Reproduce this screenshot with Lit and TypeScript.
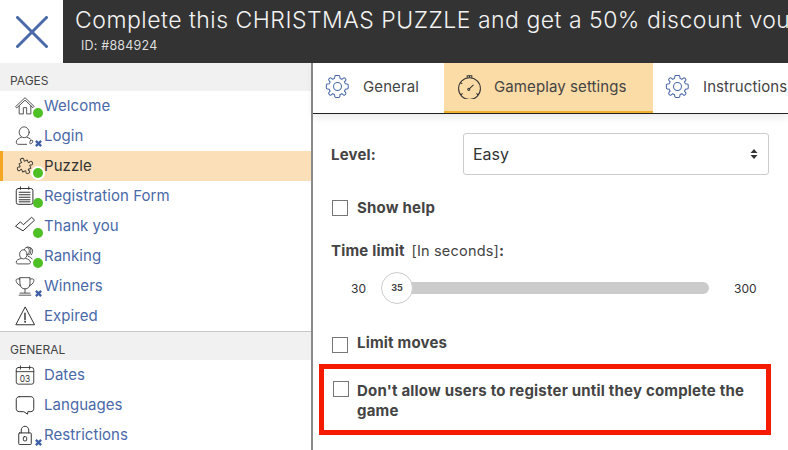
import { LitElement, html, css, svg } from "lit";
import { customElement } from "lit/decorators.js";

const ic = (body: unknown, vb = "0 0 24 24") => html`<svg class="ico" viewBox=${vb} fill="none" stroke="currentColor" stroke-width="1" stroke-linecap="round" stroke-linejoin="round">${body}</svg>`;

const icons: Record<string, unknown> = {
  home: svg`<path d="M1 12.500 12 2l11 10.500-1.500 1.500L12 5 2.500 14z"/><path d="M5 12v9.500h5v-7.500h4v7.500h5V12"/>`,
  user: svg`<ellipse cx="11" cy="7.500" rx="6" ry="6.500"/><path d="M7.500 13.500C4 15 1.500 16.500 1.500 19.500c0 1.500 1 2.500 2.500 2.500h10"/><path d="M14.500 13.500c1.500.5 3 1.200 4 2"/><path d="M18.500 17.500c1-1 2.800-.6 2.800.6 0 1.600-1.500 3.400-2.700 3.400-.9 0-1.300-2.400-.1-4z"/>`,
  puzzle: svg`<g transform="rotate(-25 12 12) scale(.9) translate(1.300 1.300)"><path stroke-width="1.200" d="M6 6h3.500c.8 0 .8-.8.4-1.500-.4-.8-.4-1.300-.4-1.500 0-1.200 1.100-2 2.500-2s2.500.8 2.500 2c0 .2 0 .7-.4 1.500-.4.7-.4 1.500.4 1.500H18v3.500c0 .8.8.8 1.500.4.8-.4 1.300-.4 1.500-.4 1.200 0 2 1.100 2 2.500s-.8 2.500-2 2.500c-.2 0-.7 0-1.500-.4-.7-.4-1.500-.4-1.500.4V18h-3.500c-.8 0-.8.8-.4 1.500.4.8.4 1.300.4 1.500 0 1.200-1.100 2-2.500 2s-2.500-.8-2.500-2c0-.2 0-.7.4-1.500.4-.7.4-1.500-.4-1.500H6v-3.500c0-.8-.8-.8-1.500-.4-.8.4-1.300.4-1.500.4-1.200 0-2-1.100-2-2.500s.8-2.500 2-2.500c.2 0 .7 0 1.500.4.700.4 1.500.4 1.500-.4z"/></g>`,
  form: svg`<rect x="1.500" y="3" width="20" height="19" rx="2.500" stroke-width="1.200"/><path d="M6.500 1v3M16.500 1v3M5 7.500h13M5 10.500h13M5 13.500h13M5 16.500h13M5 19h13" stroke-width="1.200"/>`,
  check: svg`<path d="M1 12 6.500 7l3.500 3.500 10-9 3.500 3.500L10 17.500z" stroke-width="1.200"/>`,
  ranking: svg`<ellipse cx="10" cy="10" rx="4.500" ry="5.500"/><path d="M7 15c-3 1-5.500 2-5.500 4.500 0 1.500 1 2 2.500 2h12c1.500 0 2.500-.5 2.500-2 0-2.500-2.500-3.500-5.500-4.500"/><path d="M11 4.500c.5-2 2.500-3 4-2.500 2 .7 2.500 3 2 5.500-.3 1.500-.8 2.500-1.500 3.500M14 1.500c2-1 4 0 4.800 2 .7 2 .2 5-1.200 7M17 2c2-.5 3.500 1 4 3 .4 2-.2 4-1.300 5.500M16 12.500c2 .8 4 1.500 4.500 3"/>`,
  trophy: svg`<path d="M6 2h12v7.500c0 3.500-2.500 6-6 6s-6-2.500-6-6z"/><path d="M6 3.500H3C1.500 3.500 1 5 1.500 6.500 2.300 9 4 10.500 6.500 11.500M18 3.500h3c1.500 0 2 1.500 1.500 3-.8 2.500-2.500 4-5 5"/><path d="M12 15.500V20M6 20.500h12M5 23h14"/>`,
  warn: svg`<path d="M12 1.500 1 22.500h22z" stroke-width="1.200"/><path d="M12 8.500v8" stroke-width="1.700"/><circle cx="12" cy="19" r=".6" fill="currentColor"/>`,
  cal: html`<svg class="ico" viewBox="0 0 24 24" fill="none" stroke="currentColor" stroke-width="1.100" stroke-linecap="round"><rect x="1.500" y="3" width="21" height="20" rx="2.500"/><path d="M6.500 1v4M17.500 1v4M1.500 8h21"/><text x="12" y="20" text-anchor="middle" class="caltxt">03</text></svg>`,
  chat: svg`<path d="M5 2h14c2 0 3.500 1.500 3.500 3.500v11c0 2-1.500 3.500-3.500 3.500h-3.500l-.5 3-4.500-3H5c-2 0-3.500-1.500-3.500-3.500v-11C1.500 3.500 3 2 5 2z" stroke-width="1.200"/>`,
  lock: svg`<rect x="4.500" y="9.500" width="15" height="14" rx="1" stroke-width="1.200"/><path d="M7.500 9.500V6c0-2.500 2-4.500 4.500-4.500S16.500 3.500 16.500 6v3.500" stroke-width="1.200"/><rect x="10" y="14" width="4" height="5" rx="1.200" stroke-width="1.200"/>`,
};

const gear = svg`<path d="M10.400 1.500c-.6 0-.9.400-1 1l-.3 1.800c-.6.200-1.200.5-1.700.8L5.900 3.900c-.5-.3-1-.3-1.400.1L3.800 4.700c-.4.400-.4.900-.1 1.400l1.200 1.500c-.3.500-.6 1.100-.8 1.700l-1.800.3c-.6.100-1 .4-1 1v2.800c0 .6.400.9 1 1l1.800.3c.2.600.5 1.200.8 1.700l-1.200 1.500c-.3.500-.3 1 .1 1.400l.7.700c.4.400.9.400 1.400.1l1.500-1.200c.5.300 1.100.6 1.700.8l.3 1.800c.1.600.4 1 1 1h2.800c.6 0 .9-.4 1-1l.3-1.800c.6-.2 1.200-.5 1.700-.8l1.500 1.200c.5.300 1 .3 1.400-.1l.7-.7c.4-.4.400-.9.100-1.400l-1.200-1.500c.3-.5.6-1.100.8-1.700l1.800-.3c.6-.1 1-.4 1-1v-2.800c0-.6-.4-.9-1-1l-1.800-.3c-.2-.6-.5-1.200-.8-1.700l1.200-1.500c.3-.5.300-1-.1-1.400l-.7-.7c-.4-.4-.9-.4-1.400-.1l-1.500 1.200c-.5-.3-1.100-.6-1.700-.8l-.3-1.800c-.1-.6-.4-1-1-1z"/><circle cx="12" cy="12" r="3.800"/>`;
const stopwatch = svg`<circle cx="12" cy="14" r="10.500"/><path d="M9.800 3.500V1.700h4.400v1.800"/><path d="M12 1.700v1.800"/><circle cx="11.300" cy="14.700" r="1"/><path d="m12 14 3.800-3.500M3.800 20l1.500-1.500M20.200 20l-1.500-1.500M4 8.500l1 1"/>`;

type Item = { label: string; icon: string; status?: "ok" | "no"; active?: boolean };
const pages: Item[] = [
  { label: "Welcome", icon: "home", status: "ok" },
  { label: "Login", icon: "user", status: "no" },
  { label: "Puzzle", icon: "puzzle", status: "ok", active: true },
  { label: "Registration Form", icon: "form", status: "ok" },
  { label: "Thank you", icon: "check", status: "ok" },
  { label: "Ranking", icon: "ranking", status: "ok" },
  { label: "Winners", icon: "trophy", status: "no" },
  { label: "Expired", icon: "warn" },
];
const general: Item[] = [
  { label: "Dates", icon: "cal" },
  { label: "Languages", icon: "chat" },
  { label: "Restrictions", icon: "lock", status: "no" },
];

@customElement("app-root")
export class AppRoot extends LitElement {
  static styles = css`
    :host { display: block; width: 788px; height: 450px; overflow: hidden; background: #fff; font-family: Inter, "Liberation Sans", sans-serif; color: #333; }
    .top { display: flex; height: 63px; }
    .logo { width: 63px; flex: none; display: flex; align-items: center; justify-content: center; background: #fff; color: #4a69a8; }
    .logo svg { width: 32px; height: 32px; }
    .titlebar { flex: 1; min-width: 0; background: #333; color: #f2f2f2; padding: 6px 0 0 12px; overflow: hidden; white-space: nowrap; }
    .title { font-size: 23px; font-weight: 300; line-height: 29px; letter-spacing: .5px; }
    .id { font-size: 12.500px; line-height: 16px; margin: 3px 0 0 6px; color: #ddd; letter-spacing: .2px; }
    .main { display: flex; height: 387px; }
    .side { width: 311px; flex: none; }
    .vline { width: 2px; flex: none; background: #8a8a8a; }
    .sect { background: #f1f1f1; font-size: 12px; color: #444; padding-left: 10px; height: 28px; display: flex; align-items: flex-end; line-height: 20px; box-sizing: border-box; }
    .sect.g { height: 29px; border-top: 1px solid #c8c8c8; }
    .item { position: relative; height: 30px; display: flex; align-items: center; color: #4a69a8; font-size: 15px; padding-left: 15px; box-sizing: border-box; }
    .item.active { background: #fbdfb8; color: #333; border-left: 3px solid #f5a623; padding-left: 12px; }
    .lbl { margin-top: -2px; letter-spacing: .05px; }
    .icobox { width: 20px; height: 20px; flex: none; margin-right: 9px; color: #333; display: flex; }
    .ico { width: 20px; height: 20px; display: block; }
    .caltxt { font: 10px Inter, sans-serif; fill: currentColor; stroke: none; }
    .dot { position: absolute; left: 33px; top: 17px; width: 10px; height: 10px; background: #4fbf26; border-radius: 50%; }
    .active .dot { left: 30px; box-shadow: 0 0 0 2px #fff; }
    .x { position: absolute; left: 35px; top: 19px; width: 7px; height: 7px; color: #3f5fa3; }
    .x svg { width: 7px; height: 7px; display: block; }
    .content { flex: 1; min-width: 0; }
    .tabs { display: flex; height: 51px; box-sizing: border-box; border-bottom: 1px solid #222; box-shadow: 0 4px 8px rgba(0,0,0,.08); white-space: nowrap; overflow: hidden; }
    .tab { display: flex; align-items: center; padding: 0 0 3px 12px; font-size: 15px; letter-spacing: .1px; color: #444; height: 50px; box-sizing: border-box; }
    .tab svg { width: 25px; height: 25px; flex: none; margin-right: 13px; color: #4a69a8; }
    .tab.gen { width: 131px; }
    .tab.on { width: 209px; background: #fbdba6; border-bottom: 2px solid #f0b030; padding: 0 0 1px 13px; }
    .tab.on svg { color: #333; margin-right: 12px; }
    .tab.ins { flex: 1; }
    .form { padding: 19px 19px 0 18px; }
    .level { display: flex; align-items: center; height: 42px; }
    .lab { font-size: 15px; font-weight: 700; color: #444; letter-spacing: .2px; }
    .level .lab { width: 132px; }
    .sel { flex: 1; height: 42px; box-sizing: border-box; border: 1px solid #ccc; border-radius: 3px; padding: 0 9px; display: flex; align-items: center; justify-content: space-between; font-size: 16px; color: #333; letter-spacing: 0; }
    .sel svg { width: 8px; height: 12px; margin-right: 1px; color: #333; }
    .chk { display: flex; gap: 9px; font-size: 15px; font-weight: 700; color: #444; line-height: 20px; align-items: flex-start; letter-spacing: .2px; }
    .box { width: 16px; height: 16px; box-sizing: border-box; border: 1px solid #777; flex: none; margin: 2px 0 0 1px; background: #fff; }
    .help { margin-top: 23px; }
    .tl { margin-top: 23px; line-height: 20px; }
    .tl span { font-weight: 400; font-size: 14.500px; margin-left: 3px; }
    .slider { display: flex; align-items: center; height: 34px; margin-top: 10px; font-size: 12px; color: #333; }
    .min { width: 35px; text-align: right; flex: none; }
    .trackwrap { width: 328px; flex: none; margin-left: 15px; position: relative; height: 32px; display: flex; align-items: center; }
    .track { margin-left: 18px; width: 310px; height: 12px; background: #cbcbcb; border-radius: 6px; }
    .handle { position: absolute; left: 0; top: 0; width: 32px; height: 32px; box-sizing: border-box; background: #fff; border: 1px solid #ccc; border-radius: 50%; display: flex; align-items: center; justify-content: center; font-size: 9px; font-weight: 700; color: #444; padding-bottom: 2px; }
    .max { margin-left: 25px; }
    .lim { margin-top: 28px; }
    .lim .box { margin-top: 4px; }
    .red { margin: 11px -2px 0 -12px; border: 5px solid #f51b00; padding: 10px 2px 9px 8px; gap: 8px; }
    .red span { margin-top: 2px; }
  `;

  private renderItem(i: Item) {
    const body = i.icon === "cal" ? icons.cal : ic(icons[i.icon]);
    return html`<div class="item ${i.active ? "active" : ""}">
      <span class="icobox">${body}</span><span class="lbl">${i.label}</span>
      ${i.status === "ok" ? html`<span class="dot"></span>` : ""}
      ${i.status === "no" ? html`<span class="x"><svg viewBox="0 0 8 8" stroke="currentColor" stroke-width="2.600"><path d="M1 1l6 6M7 1 1 7"/></svg></span>` : ""}
    </div>`;
  }

  render() {
    return html`
      <div class="top">
        <div class="logo"><svg viewBox="0 0 32 32" fill="none" stroke="currentColor" stroke-width="3" stroke-linecap="round"><path d="M1.500 1.500l29 29M30.500 1.500l-29 29"/></svg></div>
        <div class="titlebar">
          <div class="title">Complete this CHRISTMAS PUZZLE and get a 50% discount voucher</div>
          <div class="id">ID: #884924</div>
        </div>
      </div>
      <div class="main">
        <div class="side">
          <div class="sect">PAGES</div>
          ${pages.map((p) => this.renderItem(p))}
          <div class="sect g">GENERAL</div>
          ${general.map((p) => this.renderItem(p))}
        </div>
        <div class="vline"></div>
        <div class="content">
          <div class="tabs">
            <div class="tab gen"><svg viewBox="0 0 24 24" fill="none" stroke="currentColor" stroke-width="1">${gear}</svg>General</div>
            <div class="tab on"><svg viewBox="0 0 24 24" fill="none" stroke="currentColor" stroke-width="1">${stopwatch}</svg>Gameplay settings</div>
            <div class="tab ins"><svg viewBox="0 0 24 24" fill="none" stroke="currentColor" stroke-width="1">${gear}</svg>Instructions</div>
          </div>
          <div class="form">
            <div class="level"><span class="lab">Level:</span>
              <div class="sel">Easy<svg viewBox="0 0 8 12" fill="currentColor"><path d="M4 1l3.500 4h-7zM4 11 .5 7h7z"/></svg></div>
            </div>
            <div class="chk help"><i class="box"></i>Show help</div>
            <div class="lab tl">Time limit <span>[In seconds]</span>:</div>
            <div class="slider">
              <span class="min">30</span>
              <div class="trackwrap"><div class="track"></div><div class="handle">35</div></div>
              <span class="max">300</span>
            </div>
            <div class="chk lim"><i class="box"></i>Limit moves</div>
            <div class="chk red"><i class="box"></i><span>Don't allow users to register until they complete the game</span></div>
          </div>
        </div>
      </div>
    `;
  }
}
